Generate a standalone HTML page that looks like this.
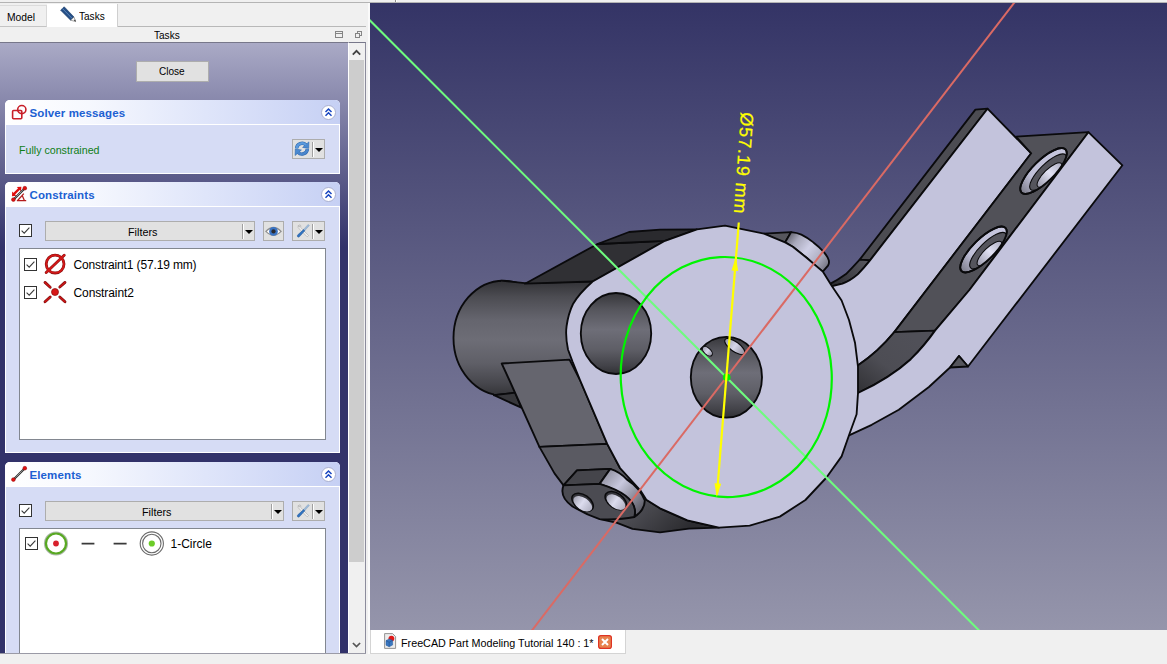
<!DOCTYPE html>
<html>
<head>
<meta charset="utf-8">
<title>FreeCAD</title>
<style>
html,body{margin:0;padding:0;}
body{width:1167px;height:664px;overflow:hidden;background:#f0f0f0;font-family:"Liberation Sans",sans-serif;font-size:11px;color:#000;position:relative;}
.abs{position:absolute;}
.t{position:absolute;white-space:nowrap;line-height:14px;font-size:11px;}
.sx{transform-origin:0 0;}
svg{position:absolute;overflow:visible;}
#topline{left:0;top:2px;width:1167px;height:1px;background:#b4b4b4;}
#tabModel{left:0;top:5px;width:47px;height:22px;background:#f0f0f0;border-right:1px solid #d9d9d9;border-top:1px solid #dcdcdc;border-bottom:1px solid #c4c4c4;box-sizing:border-box;}
#tabTasks{left:47px;top:4px;width:71px;height:23px;background:#fff;border-right:1px solid #cfcfcf;box-sizing:border-box;}
#tabline2{left:118px;top:26px;width:248px;height:1px;background:#b8b8b8;}
#panel{left:0;top:42px;width:348px;height:612px;background:linear-gradient(to bottom,#aaaac6 0px,#32326a 204px,#32326a 100%);border-top:1px solid #77778a;box-sizing:border-box;overflow:hidden;}
#sb{left:348px;top:42px;width:18px;height:612px;background:#f0f0f0;border-top:1px solid #77778a;border-right:1px solid #8c8c9c;border-left:1px solid #fff;box-sizing:border-box;}
#sbthumb{left:349px;top:60px;width:15px;height:502px;background:#cdcdcd;}
#panelbottom{left:0;top:653px;width:366px;height:1px;background:#9a9aa6;}
.grp{position:absolute;left:5px;width:335px;background:#d6dcf5;border-radius:5px 5px 0 0;box-shadow:inset 0 0 0 1px #fff;box-sizing:border-box;}
.gin{position:absolute;left:1px;top:0;width:333px;height:100%;}
.ghead{position:absolute;left:0;top:0;width:335px;height:25px;border-radius:5px 5px 0 0;background:linear-gradient(to right,#ffffff 0%,#f6f8fe 25%,#dfe5fa 60%,#c6d0f4 100%);border-bottom:1px solid #fff;box-sizing:border-box;}
.gtitle{position:absolute;left:23.5px;top:6px;font-weight:bold;color:#2060d2;font-size:11.5px;letter-spacing:0.12px;line-height:14px;white-space:nowrap;}
.btn{position:absolute;background:#e1e1e1;border:1px solid #adadad;box-sizing:border-box;}
.sep{position:absolute;top:2px;width:1px;height:15px;background:#a0a0a0;border-right:1px solid #fff;}
.arr{position:absolute;width:0;height:0;border-left:4px solid transparent;border-right:4px solid transparent;border-top:4.5px solid #000;margin-left:-1px;margin-top:1px;}
.cb{position:absolute;width:13px;height:13px;background:#fff;border:1px solid #333;box-sizing:border-box;}
.cb svg{left:0;top:0;}
.list{position:absolute;background:#fff;border:1px solid #828790;box-sizing:border-box;}
.coll{position:absolute;left:315px;top:5px;width:15px;height:15px;border-radius:50%;background:#fff;border:1px solid #aab0d0;box-sizing:border-box;}
#view{left:370px;top:3px;width:797px;height:627px;overflow:hidden;background:linear-gradient(to bottom,#343466 0%,#9595ab 100%);}
#doctab{left:370px;top:630px;width:256px;height:24px;background:#fff;border-right:1px solid #d4d4d4;border-bottom:1px solid #d4d4d4;border-left:1px solid #d4d4d4;box-sizing:border-box;}
</style>
</head>
<body>
<div class="abs" id="topline"></div>
<div class="abs" style="left:395px;top:0;width:1px;height:2px;background:#8c8c8c;"></div><div class="abs" style="left:396px;top:0;width:1px;height:2px;background:#fff;"></div>
<div class="abs" style="left:368px;top:3px;width:2px;height:651px;background:#fafafa;"></div>
<div class="abs" id="tabModel"></div>
<div class="abs" id="tabTasks"></div>
<div class="abs" id="tabline2"></div>
<div class="t sx" style="left:7.2px;top:10px;transform:scaleX(0.935);">Model</div>
<svg style="left:58px;top:5px;" width="20" height="18" viewBox="58 5 20 18">
  <path d="M60.6,10.2 L64.2,6.8 L74,17 L70.6,20.2 Z" fill="#244e86" stroke="#1a3a66" stroke-width="0.6"/>
  <path d="M62.4,8.5 L72.3,18.6" stroke="#5c86ba" stroke-width="1" fill="none"/>
  <path d="M70.6,20.2 L74,17 L75.6,21.6 Z" fill="#f4f4f4" stroke="#555" stroke-width="0.5"/>
  <path d="M73.9,20.2 L75.2,19.6 L75.8,21.8 Z" fill="#222"/>
</svg>
<div class="t sx" style="left:79px;top:9px;transform:scaleX(0.914);">Tasks</div>
<div class="t sx" style="left:153.5px;top:28px;transform:scaleX(0.914);">Tasks</div>
<svg style="left:334px;top:29px;" width="30" height="12" viewBox="334 29 30 12">
  <rect x="335.5" y="31.5" width="7" height="6" fill="none" stroke="#858585" stroke-width="1"/>
  <line x1="335.5" y1="33.5" x2="342.5" y2="33.5" stroke="#858585" stroke-width="1"/>
  <rect x="357.5" y="31.5" width="4" height="4" fill="none" stroke="#858585" stroke-width="1"/>
  <rect x="355.5" y="33.5" width="4" height="4" fill="#f0f0f0" stroke="#858585" stroke-width="1"/>
</svg>

<div class="abs" id="panel">
  <div class="btn" style="left:136px;top:18px;width:73px;height:21px;"></div>
  <div class="t sx" style="left:158.5px;top:21px;transform:scaleX(0.914);">Close</div>

  <!-- Solver messages -->
  <div class="grp" style="top:57px;height:74px;">
    <div class="ghead"></div><div class="gin">
    <svg style="left:5px;top:3px;" width="20" height="20" viewBox="0 0 20 20">
      <rect x="1.6" y="7.5" width="9.2" height="8.2" rx="1" fill="none" stroke="#c81e28" stroke-width="1.6"/>
      <circle cx="10.8" cy="6.6" r="4.1" fill="none" stroke="#c81e28" stroke-width="1.6"/>
    </svg>
    <div class="gtitle">Solver messages</div>
    <div class="coll"><svg width="13" height="13" viewBox="0 0 13 13"><path d="M3.5,6 L6.5,3 L9.5,6 M3.5,9.8 L6.5,6.8 L9.5,9.8" fill="none" stroke="#1846c0" stroke-width="1.5"/></svg></div>
    <div class="t sx" style="left:12.5px;top:43px;color:#0e7e16;transform:scaleX(0.968);">Fully constrained</div>
    <div class="btn" style="left:286px;top:39px;width:33px;height:20px;">
      <div class="sep" style="left:19px;"></div><div class="arr" style="left:23px;top:7px;"></div>
      <svg style="left:0px;top:0px;" width="18" height="18" viewBox="0 0 18 18">
        <path d="M3.6,8.4 A5.5,5.5 0 0 1 13,5" fill="none" stroke="#2e68ac" stroke-width="3.4"/>
        <path d="M15.9,1.9 L15.7,8.4 L9.6,7.4 Z" fill="#4a8ad2" stroke="#2e68ac" stroke-width="0.6"/>
        <path d="M3.6,8.4 A5.5,5.5 0 0 1 13,5" fill="none" stroke="#5a9ade" stroke-width="2.4"/>
        <path d="M14.4,9 A5.5,5.5 0 0 1 5,12.4" fill="none" stroke="#2e68ac" stroke-width="3.4"/>
        <path d="M2.1,15.5 L2.3,9 L8.4,10 Z" fill="#4a8ad2" stroke="#2e68ac" stroke-width="0.6"/>
        <path d="M14.4,9 A5.5,5.5 0 0 1 5,12.4" fill="none" stroke="#4a86cc" stroke-width="2.4"/>
      </svg>
    </div>
  </div></div>

  <!-- Constraints -->
  <div class="grp" style="top:139px;height:271px;">
    <div class="ghead"></div><div class="gin">
    <svg style="left:5px;top:3px;" width="20" height="20" viewBox="11 185 20 20">
      <path d="M13.6,194.4 L19.6,188.4" stroke="#e00c0c" stroke-width="2.2" fill="none"/>
      <path d="M12,196.2 L12.2,191.6 L16.4,195.8 Z M21.4,186.8 L16.8,187 L21,191.2 Z" fill="#e00c0c"/>
      <path d="M13.6,199.4 L24.6,188.4" stroke="#2c2c2c" stroke-width="2.1" fill="none"/>
      <path d="M13.6,199.4 L24.6,188.4" stroke="#fff" stroke-width="0.9" stroke-dasharray="0.8 0.8" fill="none"/>
      <circle cx="13.4" cy="199.6" r="1.9" fill="#e01010" stroke="#900c0c" stroke-width="0.5"/>
      <circle cx="24.8" cy="188.2" r="1.9" fill="#e01010" stroke="#900c0c" stroke-width="0.5"/>
      <path d="M26.2,200.7 L17.4,200.7 L23.8,193.6 M22.2,195.6 L24.4,200.6" stroke="#b41c1c" stroke-width="1.3" fill="none" stroke-linejoin="round"/>
    </svg>
    <div class="gtitle">Constraints</div>
    <div class="coll"><svg width="13" height="13" viewBox="0 0 13 13"><path d="M3.5,6 L6.5,3 L9.5,6 M3.5,9.8 L6.5,6.8 L9.5,9.8" fill="none" stroke="#1846c0" stroke-width="1.5"/></svg></div>
    <div class="cb" style="left:13px;top:42px;"><svg width="11" height="11" viewBox="0 0 11 11"><path d="M1.6,5.6 L4.2,8.2 L9.4,2.6" fill="none" stroke="#3a3a3a" stroke-width="1.1"/></svg></div>
    <div class="btn" style="left:39px;top:39px;width:210px;height:20px;">
      <div class="sep" style="left:196px;"></div><div class="arr" style="left:200px;top:7px;"></div>
    </div>
    <div class="t sx" style="left:121.7px;top:43px;transform:scaleX(0.982);">Filters</div>
    <div class="btn" style="left:257px;top:39px;width:21px;height:20px;">
      <svg style="left:1px;top:2.6px;" width="17" height="12.75" viewBox="0 0 16 12">
        <path d="M0.9,6 Q8,-1.4 15.1,6 Q8,13.4 0.9,6 Z" fill="#fff" stroke="#909090" stroke-width="1.3"/>
        <circle cx="8" cy="6" r="4.1" fill="#3a74c4"/>
        <circle cx="8" cy="6" r="2" fill="#2a2a30"/>
      </svg>
    </div>
    <div class="btn" style="left:286px;top:39px;width:33px;height:20px;">
      <div class="sep" style="left:19px;"></div><div class="arr" style="left:23px;top:7px;"></div>
      <svg style="left:2px;top:1px;" width="16" height="16" viewBox="0 0 16 16">
        <path d="M3.4,2.2 Q2.2,4.6 4.4,6 L12.2,13.8 L13.6,12.6 L5.8,4.6 Q6.2,2.4 4.8,1.6 L5,3.6 L4,4 Z" fill="#f0f0f0" stroke="#b2b2b2" stroke-width="0.7"/>
        <path d="M13.2,1.4 L14.4,2.6 L9,8.4 L7.8,7.2 Z" fill="#9ab8d8" stroke="#7a98b8" stroke-width="0.4"/>
        <path d="M8.6,6.6 L9.8,7.8 L4.6,13.6 Q3.4,14.6 2.6,13.8 Q1.8,13 2.8,11.8 Z" fill="#2f72c0" stroke="#24589a" stroke-width="0.5"/>
      </svg>
    </div>
    <div class="list" style="left:13px;top:66px;width:307px;height:192px;"></div>
    <div class="cb" style="left:18px;top:76px;"><svg width="11" height="11" viewBox="0 0 11 11"><path d="M1.6,5.6 L4.2,8.2 L9.4,2.6" fill="none" stroke="#3a3a3a" stroke-width="1.1"/></svg></div>
    <div class="cb" style="left:18px;top:104px;"><svg width="11" height="11" viewBox="0 0 11 11"><path d="M1.6,5.6 L4.2,8.2 L9.4,2.6" fill="none" stroke="#3a3a3a" stroke-width="1.1"/></svg></div>
    <svg style="left:37px;top:70px;" width="26" height="56" viewBox="43 252 26 56">
      <circle cx="55.1" cy="264.1" r="8.9" fill="none" stroke="#8a0e0e" stroke-width="2.8"/>
      <path d="M46.2,272.6 L64.2,255.2" stroke="#8a0e0e" stroke-width="2.8" stroke-linecap="round" fill="none"/>
      <circle cx="55.1" cy="264.1" r="8.9" fill="none" stroke="#d41818" stroke-width="1.7"/>
      <path d="M46.2,272.6 L64.2,255.2" stroke="#d41818" stroke-width="1.7" stroke-linecap="round" fill="none"/>
      <g stroke-linecap="round" fill="none">
        <path d="M45,282.4 L50.2,287.2 M65,282.4 L59.8,287 M45,301.8 L50.2,297 M65,301.8 L59.8,297" stroke="#7a0c0c" stroke-width="2.8"/>
        <path d="M45,282.4 L50.2,287.2 M65,282.4 L59.8,287 M45,301.8 L50.2,297 M65,301.8 L59.8,297" stroke="#cc1616" stroke-width="1.6"/>
      </g>
      <circle cx="55" cy="292" r="3.5" fill="#d81818" stroke="#8a0e0e" stroke-width="0.7"/>
    </svg>
    <div class="t" style="left:67.5px;top:76px;font-size:12px;letter-spacing:-0.14px;">Constraint1 (57.19 mm)</div>
    <div class="t" style="left:67.5px;top:104px;font-size:12px;letter-spacing:-0.1px;">Constraint2</div>
  </div></div>

  <!-- Elements -->
  <div class="grp" style="top:419px;height:240px;">
    <div class="ghead"></div><div class="gin">
    <svg style="left:5px;top:3px;" width="20" height="20" viewBox="11 465 20 20">
      <path d="M13.6,479.4 L24.6,468.4" stroke="#2c2c2c" stroke-width="2.1" fill="none"/>
      <path d="M13.6,479.4 L24.6,468.4" stroke="#fff" stroke-width="0.9" stroke-dasharray="0.8 0.8" fill="none"/>
      <circle cx="13.4" cy="479.6" r="1.9" fill="#e01010" stroke="#900c0c" stroke-width="0.5"/>
      <circle cx="24.8" cy="468.2" r="1.9" fill="#e01010" stroke="#900c0c" stroke-width="0.5"/>
    </svg>
    <div class="gtitle">Elements</div>
    <div class="coll"><svg width="13" height="13" viewBox="0 0 13 13"><path d="M3.5,6 L6.5,3 L9.5,6 M3.5,9.8 L6.5,6.8 L9.5,9.8" fill="none" stroke="#1846c0" stroke-width="1.5"/></svg></div>
    <div class="cb" style="left:13px;top:42px;"><svg width="11" height="11" viewBox="0 0 11 11"><path d="M1.6,5.6 L4.2,8.2 L9.4,2.6" fill="none" stroke="#3a3a3a" stroke-width="1.1"/></svg></div>
    <div class="btn" style="left:39px;top:39px;width:239px;height:20px;">
      <div class="sep" style="left:225px;"></div><div class="arr" style="left:229px;top:7px;"></div>
    </div>
    <div class="t sx" style="left:135.7px;top:43px;transform:scaleX(0.982);">Filters</div>
    <div class="btn" style="left:286px;top:39px;width:33px;height:20px;">
      <div class="sep" style="left:19px;"></div><div class="arr" style="left:23px;top:7px;"></div>
      <svg style="left:2px;top:1px;" width="16" height="16" viewBox="0 0 16 16">
        <path d="M3.4,2.2 Q2.2,4.6 4.4,6 L12.2,13.8 L13.6,12.6 L5.8,4.6 Q6.2,2.4 4.8,1.6 L5,3.6 L4,4 Z" fill="#f0f0f0" stroke="#b2b2b2" stroke-width="0.7"/>
        <path d="M13.2,1.4 L14.4,2.6 L9,8.4 L7.8,7.2 Z" fill="#9ab8d8" stroke="#7a98b8" stroke-width="0.4"/>
        <path d="M8.6,6.6 L9.8,7.8 L4.6,13.6 Q3.4,14.6 2.6,13.8 Q1.8,13 2.8,11.8 Z" fill="#2f72c0" stroke="#24589a" stroke-width="0.5"/>
      </svg>
    </div>
    <div class="list" style="left:13px;top:66px;width:307px;height:192px;"></div>
    <div class="cb" style="left:19px;top:75px;"><svg width="11" height="11" viewBox="0 0 11 11"><path d="M1.6,5.6 L4.2,8.2 L9.4,2.6" fill="none" stroke="#3a3a3a" stroke-width="1.1"/></svg></div>
    <svg style="left:37px;top:68px;" width="130" height="28" viewBox="43 530 130 28">
      <circle cx="56" cy="543.5" r="11.4" fill="none" stroke="#9aa89a" stroke-width="1.4" opacity="0.8"/>
      <circle cx="56" cy="543.5" r="10" fill="#fff" stroke="#58a822" stroke-width="2.2"/>
      <circle cx="56" cy="543.5" r="2.9" fill="#d8202c"/>
      <path d="M81.6,543.6 L94.4,543.6 M113.6,543.6 L126.6,543.6" stroke="#3a3a3a" stroke-width="1.6" fill="none"/>
      <circle cx="151.8" cy="543.5" r="11.6" fill="#fff" stroke="#6a6a6a" stroke-width="1.1"/>
      <circle cx="151.8" cy="543.5" r="9.2" fill="#fff" stroke="#6a6a6a" stroke-width="1.1"/>
      <circle cx="151.8" cy="543.5" r="3.1" fill="#6ccc28"/>
    </svg>
    <div class="t" style="left:164.5px;top:75px;font-size:12px;">1-Circle</div>
  </div></div>
</div>
<div class="abs" id="sb"></div>
<div class="abs" id="sbthumb"></div>
<svg style="left:349px;top:43px;" width="16" height="611" viewBox="349 43 16 611">
  <path d="M352.8,54.6 L356.5,50.8 L360.2,54.6" fill="none" stroke="#404040" stroke-width="1.8"/>
  <path d="M352.9,643 L356.5,646.6 L360.1,643" fill="none" stroke="#555" stroke-width="1.7"/>
</svg>
<div class="abs" id="panelbottom"></div>

<div class="abs" id="view">
<svg id="scene" width="797" height="627" viewBox="370 3 797 627">
<defs>
  <linearGradient id="gCyl" x1="0" y1="281" x2="0" y2="395" gradientUnits="userSpaceOnUse">
    <stop offset="0" stop-color="#323236"/><stop offset="0.14" stop-color="#4c4c52"/><stop offset="0.34" stop-color="#65656e"/><stop offset="0.52" stop-color="#6d6d76"/><stop offset="0.72" stop-color="#5f5f67"/><stop offset="0.9" stop-color="#46464c"/><stop offset="1" stop-color="#343438"/>
  </linearGradient>
  <linearGradient id="gHole1" x1="0" y1="293" x2="0" y2="374" gradientUnits="userSpaceOnUse">
    <stop offset="0" stop-color="#36363a"/><stop offset="0.2" stop-color="#55555c"/><stop offset="0.45" stop-color="#6e6e78"/><stop offset="0.7" stop-color="#5e5e66"/><stop offset="0.9" stop-color="#424248"/><stop offset="1" stop-color="#303034"/>
  </linearGradient>
  <linearGradient id="gHole2" x1="0" y1="336" x2="0" y2="418" gradientUnits="userSpaceOnUse">
    <stop offset="0" stop-color="#36363a"/><stop offset="0.2" stop-color="#55555c"/><stop offset="0.45" stop-color="#6e6e78"/><stop offset="0.7" stop-color="#5e5e66"/><stop offset="0.9" stop-color="#424248"/><stop offset="1" stop-color="#303034"/>
  </linearGradient>
  <linearGradient id="gBand" x1="640" y1="490" x2="680" y2="535" gradientUnits="userSpaceOnUse">
    <stop offset="0" stop-color="#55555c"/><stop offset="1" stop-color="#2c2c30"/>
  </linearGradient>
  <linearGradient id="gChanLow" x1="905" y1="332" x2="858" y2="392" gradientUnits="userSpaceOnUse">
    <stop offset="0" stop-color="#505058"/><stop offset="0.5" stop-color="#4d4d54"/><stop offset="1" stop-color="#313135"/>
  </linearGradient>
  <linearGradient id="gStrip" x1="866" y1="262" x2="834" y2="286" gradientUnits="userSpaceOnUse">
    <stop offset="0" stop-color="#56565d"/><stop offset="0.6" stop-color="#3e3e44"/><stop offset="1" stop-color="#2c2c30"/>
  </linearGradient>
  <linearGradient id="gPin" x1="788" y1="237" x2="828" y2="268" gradientUnits="userSpaceOnUse">
    <stop offset="0" stop-color="#6a6a76"/><stop offset="0.18" stop-color="#a8a8ba"/><stop offset="0.45" stop-color="#cfcfe6"/><stop offset="0.7" stop-color="#b4b4c8"/><stop offset="1" stop-color="#70707c"/>
  </linearGradient>
  <linearGradient id="gBoss" x1="600" y1="475" x2="640" y2="510" gradientUnits="userSpaceOnUse">
    <stop offset="0" stop-color="#8a8a98"/><stop offset="0.4" stop-color="#c8c8de"/><stop offset="1" stop-color="#60606a"/>
  </linearGradient>
  <linearGradient id="gCb" x1="1" y1="0" x2="0" y2="0">
    <stop offset="0" stop-color="#c6c6de"/><stop offset="0.7" stop-color="#c0c0d8"/><stop offset="1" stop-color="#7c7c8a"/>
  </linearGradient>
  <linearGradient id="gSm" x1="0" y1="0" x2="1" y2="0">
    <stop offset="0" stop-color="#a4a4b4"/><stop offset="0.45" stop-color="#dcdcee"/><stop offset="1" stop-color="#b0b0c2"/>
  </linearGradient>
  <linearGradient id="gThru2" x1="0" y1="0" x2="1" y2="0">
    <stop offset="0" stop-color="#9c9cac"/><stop offset="0.5" stop-color="#d6d6ea"/><stop offset="1" stop-color="#8c8c9a"/>
  </linearGradient>
  <linearGradient id="gThru" x1="1" y1="0" x2="0" y2="0">
    <stop offset="0" stop-color="#b0b0c4"/><stop offset="0.45" stop-color="#e2e2f4"/><stop offset="1" stop-color="#9a9aac"/>
  </linearGradient>
</defs>
<g stroke="#0a0a0c" stroke-width="1.85" stroke-linejoin="round" stroke-linecap="round">
  <!-- ARM: dark back strip -->
  <path d="M975.4,109.6 L987.5,108.7 L870,260.4 L859.7,259.6 Z" fill="#4c4c52"/>
  <path d="M859.7,259.6 L870,260.4 Q864,268 858,274.1 Q850,281 842.5,283.6 L832.3,286.1 L828,284.6 L830.5,283.6 Q838,280 846,274.1 Q852,268 859.7,259.6 Z" fill="url(#gStrip)"/>
  <!-- left plate light face -->
  <path d="M987.5,108.7 L1031.2,153.3 L894.3,332.1 Q878,352 858.1,365.2 L840,372 L828,285 L832.3,286.1 L842.5,283.6 Q850,281 858,274.1 Q864,268 870,260.4 Z" fill="#c3c3dc"/>
  <!-- dark channel -->
  <polygon points="1016,136.7 1088.4,132.2 969.4,290 935,330.6 894.3,332.1 1031.2,153.3" fill="#515158"/>
  <path d="M894.3,332.1 L935,330.6 Q925,345 910.8,359.2 Q890,378 858,393 L840,395 L840,372 L858.1,365.2 Q878,352 894.3,332.1 Z" fill="url(#gChanLow)"/>
  <!-- right plate + lip -->
  <path d="M1088.4,132.2 L1122.4,165.3 L968,366.5 L959,356 L950,367.5 L928.9,387 L898.8,409.7 L871.7,424.8 L849,435.3 L840,436 L840,395 L858,393 Q890,378 910.8,359.2 Q925,345 935,330.6 L969.4,290 Z" fill="#c3c3dc"/>
  <polygon points="959,356 968,366.5 950,367.5" fill="#55555c"/>
  <!-- arm holes -->
  <g transform="translate(1043.5,171) rotate(-44.5)">
    <clipPath id="cpA"><ellipse cx="0" cy="0" rx="30.8" ry="10.8"/></clipPath>
    <ellipse cx="0" cy="0" rx="30.8" ry="10.8" fill="url(#gCb)"/>
    <g clip-path="url(#cpA)">
    <ellipse cx="2.5" cy="4" rx="24.5" ry="8.3" fill="#55555d" stroke-width="1.1"/>
    <ellipse cx="1.5" cy="7" rx="16.5" ry="5.6" fill="url(#gThru)" stroke-width="1"/>
    </g>
    <ellipse cx="0" cy="0" rx="30.8" ry="10.8" fill="none"/>
  </g>
  <g transform="translate(983.5,249.5) rotate(-44.5)">
    <ellipse cx="0" cy="0" rx="30.8" ry="10.8" fill="url(#gCb)"/>
    <g clip-path="url(#cpA)">
    <ellipse cx="2.5" cy="4" rx="24.5" ry="8.3" fill="#55555d" stroke-width="1.1"/>
    <ellipse cx="1.5" cy="7" rx="16.5" ry="5.6" fill="url(#gThru)" stroke-width="1"/>
    </g>
    <ellipse cx="0" cy="0" rx="30.8" ry="10.8" fill="none"/>
  </g>
  <!-- pin behind disc -->
  <polygon points="764,233.6 791.1,232.1 785.1,242.4 780,241" fill="#56565d"/>
  <path d="M791.1,232.1 Q797,232.6 801.4,234.7 Q808,238 813.4,242.4 Q819,246.6 823.7,251.8 Q828,257 828.8,260.4 Q829.4,263.6 828,265.6 L822.8,271.6 L814.3,264.7 L806.6,257.8 L792.8,246.7 L785.1,242.4 Z" fill="url(#gPin)"/>
  <!-- cylinder boss -->
  <ellipse cx="503.5" cy="338" rx="50" ry="57.3" fill="url(#gCyl)"/>
  <polygon points="501,280.7 525,283.2 592,281.3 575,300 566,332 570,360 501.7,363.5 515.3,392.7 494,395.2" fill="url(#gCyl)" stroke="none"/>
  <polyline points="501,280.7 525,283.2 592,281.3" fill="none"/>
  <polyline points="494,395.2 515.3,392.7" fill="none"/>
  <polygon points="494,395.2 515.3,392.7 521.3,407.7" fill="#37373b"/>
  <!-- dark top faces -->
  <polygon points="525,283.7 597.5,244 665,240.8 592.6,281.5" fill="#303034"/>
  <polygon points="597.5,244 629,232 660,229.6 697,229.4 665,240.8" fill="#2a2a2e"/>
  <!-- web -->
  <polygon points="501.7,363.5 569.5,359.6 580,380 607.2,443.9 539.4,446.9 509.3,380" fill="#65656e"/>
  <polygon points="539.4,446.9 607.2,443.9 620,468 640.3,488.4 610.2,468.9 577,470.4 563.5,485.4 554.5,473.4" fill="#5a5a62"/>
  <!-- bottom band -->
  <path d="M640.3,490.3 L646.3,499.7 L660,508.3 L687.4,520.3 L719,527.6 L689,528.6 L660,532.3 L632.5,528.8 L617.1,522.8 L600,519 L620,495 Z" fill="url(#gBand)"/>
  <!-- small boss -->
  <polygon points="563.5,485.4 577,470.4 610.2,468.9 599.6,483.9" fill="#45454b"/>
  <path d="M599.6,483.9 L610.2,468.9 Q620,472 626.7,479.4 Q640,488 644.8,500.5 Q645,510 634.3,517 Q640,498 599.6,483.9 Z" fill="url(#gBoss)"/>
  <path d="M563.5,485.4 L599.6,483.9 Q640,496 634.3,517 Q620,520 599.6,519.2 Q585,514 572.5,506.5 Q559,497 563.5,485.4 Z" fill="#4b4b52"/>
  <g transform="translate(582.6,502.3) rotate(35)"><ellipse rx="12" ry="7.4" fill="#34343a" stroke-width="1.5"/><ellipse cx="1" cy="1.1" rx="10.6" ry="6" fill="url(#gSm)" stroke="none"/></g>
  <g transform="translate(615.8,500.6) rotate(35)"><ellipse rx="12" ry="7.4" fill="#34343a" stroke-width="1.5"/><ellipse cx="1" cy="1.1" rx="10.6" ry="6" fill="url(#gSm)" stroke="none"/></g>
  <!-- disc + flange light face -->
  <path d="M725,225.7 L764,233.6 L785.1,242.4 L792.8,246.7 L806.6,257.8 L822.8,271.6 L831.2,285 L841.6,300.5 L849,320 L855,342.7 L858,366.7 L858,393 L856.6,414.2 L849,435.3 L841.6,456.4 L826.5,477.5 L805.4,500 L779.8,516.6 L749.7,525.7 L719,527.6 L687.4,520.3 L660,508.3 L646.3,499.7 L640.3,490.3 L620,468 L607.2,443.9 L580,380 L572.5,361.6 L568,349.5 Q565.2,336 566.6,326 Q568.4,313.4 573,304 Q579,293.6 592.6,281.5 L665,240.8 L697,229.4 L725,225.7 Z" fill="#c3c3dc"/>
  <!-- holes -->
  <ellipse cx="616" cy="333.5" rx="35.2" ry="40.5" fill="url(#gHole1)"/>
  <ellipse cx="726.4" cy="377.2" rx="35.6" ry="40.4" fill="url(#gHole2)"/>
  <g transform="translate(707.4,351.3) rotate(42)"><ellipse rx="6" ry="3.3" fill="url(#gThru2)" stroke-width="1"/></g>
  <g transform="translate(734.8,346.6) rotate(36)"><ellipse rx="12" ry="4.8" fill="url(#gThru2)" stroke-width="1.1"/></g>
</g>
<!-- sketch -->
<g fill="none">
  <line x1="1014.8" y1="2" x2="531.5" y2="631" stroke="#da6a64" stroke-width="2"/>
  <line x1="369" y1="19.4" x2="979.6" y2="631" stroke="#6efc7e" stroke-width="2.1"/>
  <ellipse cx="726.25" cy="377.05" rx="105.5" ry="120.1" stroke="#00f400" stroke-width="2.2" transform="rotate(-3 726.25 377.05)"/>
  <circle cx="726.7" cy="377.2" r="3.8" fill="#00f000"/>
  <line x1="738.8" y1="222.5" x2="716.9" y2="495" stroke="#ffff00" stroke-width="2.2"/>
  <polygon points="735.9,257.2 738.2,271 731.5,270.5" fill="#ffff00"/>
  <polygon points="716.8,497 721.2,483.7 714.5,483.2" fill="#ffff00"/>
</g>
<text transform="translate(741,112) rotate(94)" font-family="Liberation Sans, sans-serif" font-size="18" letter-spacing="0.9" fill="#ffff00" stroke="#ffff00" stroke-width="0.25">Ø57.19 mm</text>
</svg>
</div>

<div class="abs" id="doctab"></div>
<svg style="left:383px;top:632px;" width="14" height="18" viewBox="383 632 14 18">
  <path d="M384.6,633.6 L392.6,633.6 L395.6,636.6 L395.6,648.4 L384.6,648.4 Z" fill="#ececec" stroke="#8a8a8a" stroke-width="0.9"/>
  <circle cx="391.4" cy="638.6" r="2.9" fill="#e01818"/>
  <path d="M386,640.6 L389.4,639 L392.6,640.4 L392.6,645 L389.2,646.8 L386,645.2 Z" fill="#3a78c2" stroke="#285a9a" stroke-width="0.5"/>
  <path d="M386,640.6 L389.2,642.2 L392.6,640.4 M389.2,642.2 L389.2,646.8" fill="none" stroke="#1e4a84" stroke-width="0.5"/>
</svg>
<div class="t sx" style="left:401px;top:636px;transform:scaleX(0.978);">FreeCAD Part Modeling Tutorial 140 : 1*</div>
<svg style="left:598px;top:635px;" width="14" height="14" viewBox="0 0 14 14">
  <rect x="0.6" y="0.6" width="12.8" height="12.8" rx="2.2" fill="#e8824e" stroke="#de3424" stroke-width="1.2"/>
  <path d="M4,4 L10,10 M10,4 L4,10" stroke="#fff" stroke-width="2" fill="none"/>
</svg>
</body>
</html>
